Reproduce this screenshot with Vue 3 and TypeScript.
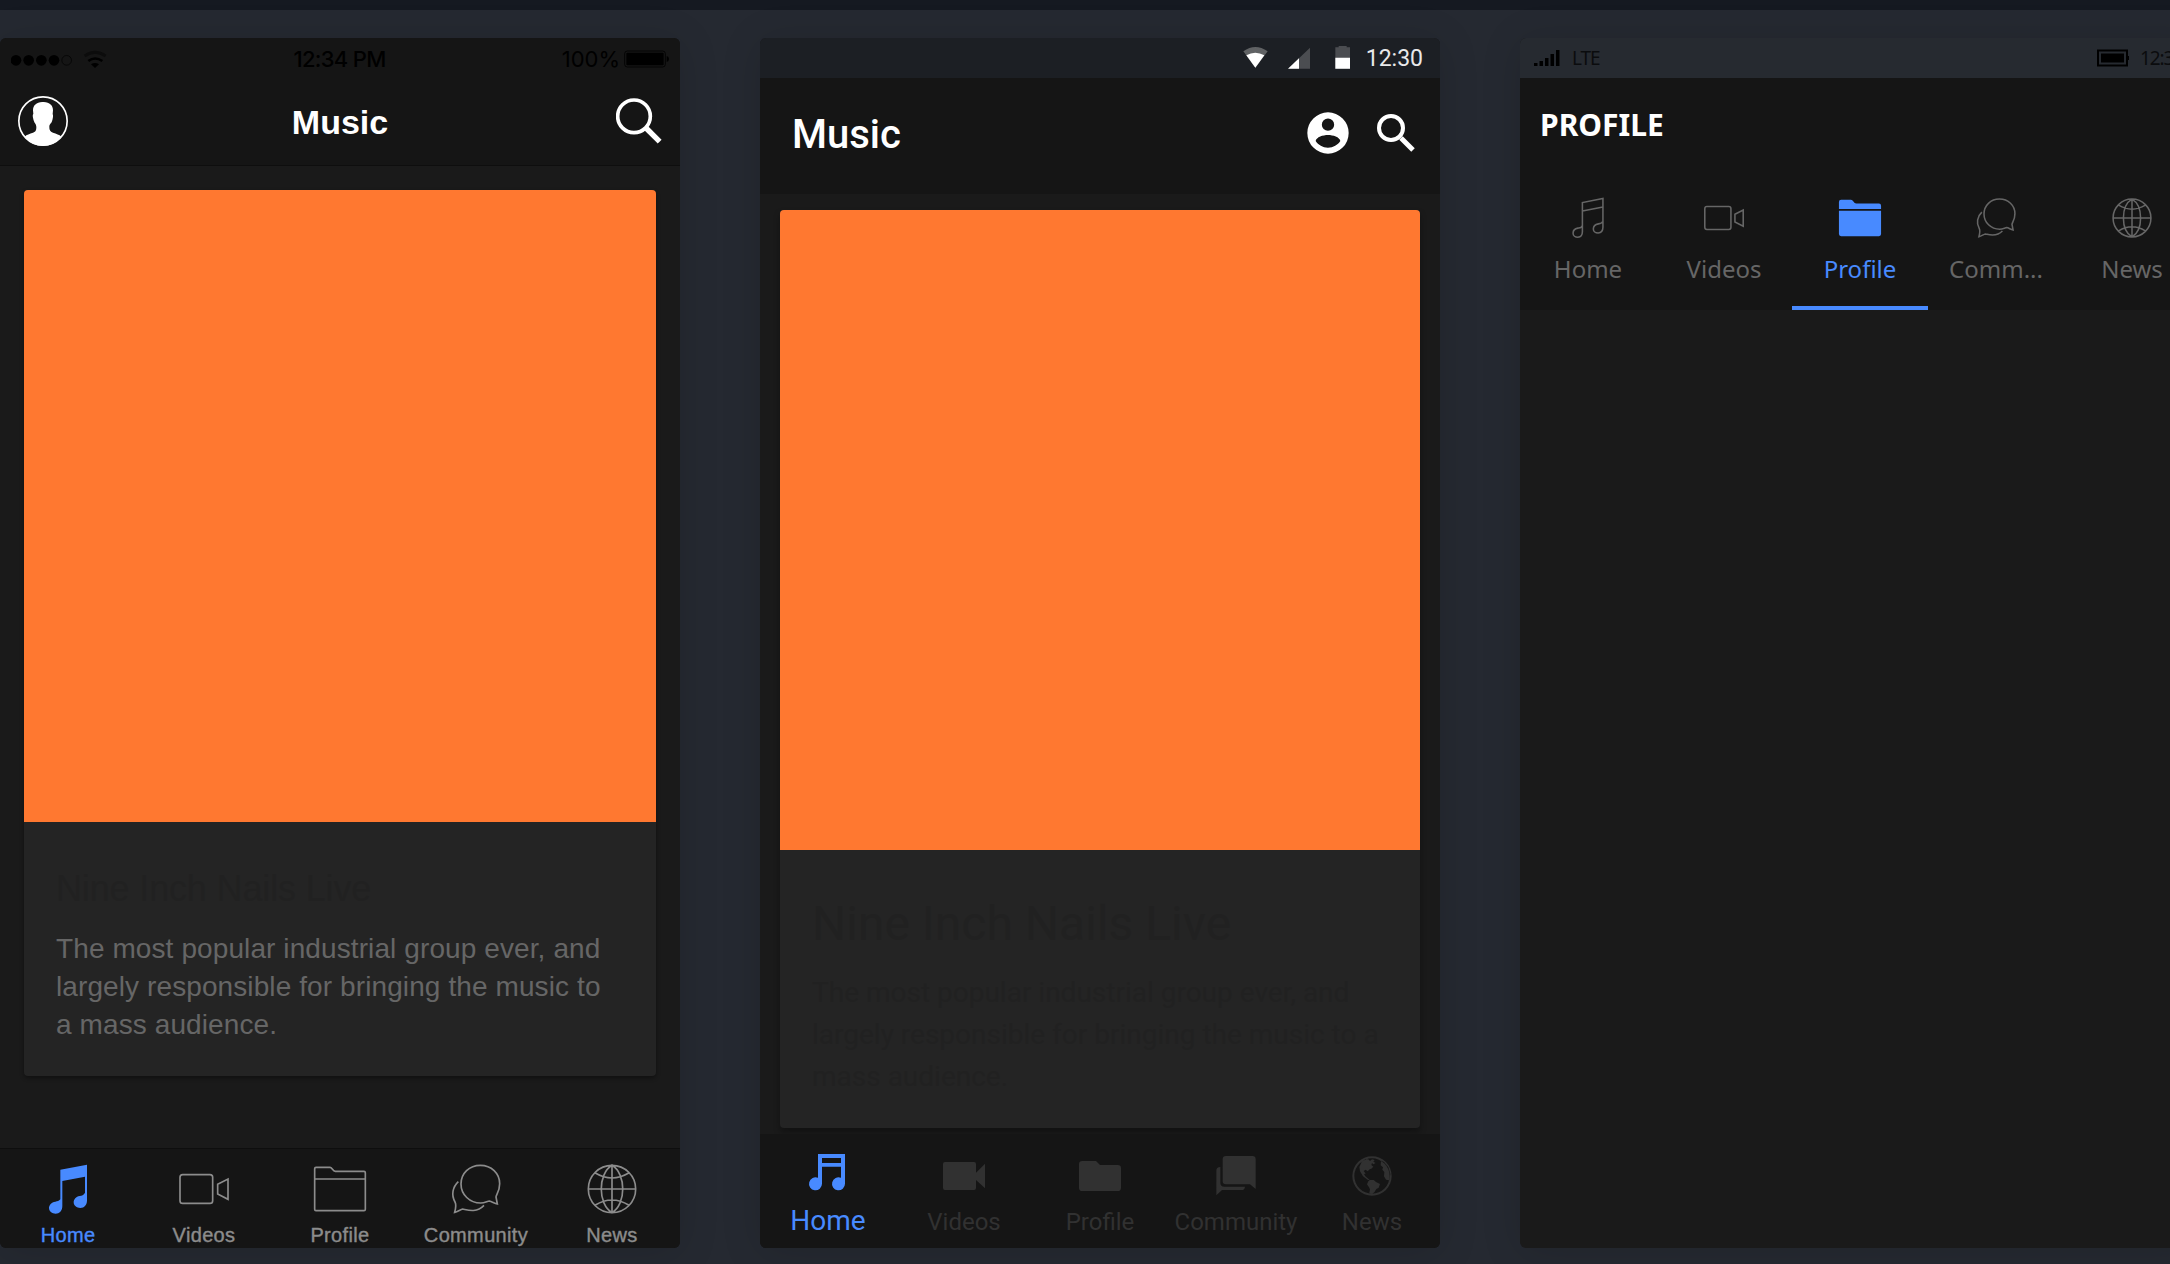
<script setup lang="ts">
type TabName = 'Home' | 'Videos' | 'Profile' | 'Community' | 'News'

const tabs: TabName[] = ['Home', 'Videos', 'Profile', 'Community', 'News']

const card = {
  title: 'Nine Inch Nails Live',
  text: 'The most popular industrial group ever, and largely responsible for bringing the music to a mass audience.',
}

/* Stroked glyphs on a 180-unit grid, shared by the iOS and Windows previews */
const outline: Record<TabName, string> = {
  Home: 'M69 142V32L146 17V125M69 64L146 49M69 118C66 128 58 127 52 128C40 130 34 138 34 147C34 156 42 162 52 162C63 162 69 154 69 142M146 102C143 110 137 111 129 112C118 114 110 121 110 131C110 140 118 146 128 146C139 146 146 138 146 125',
  Videos: 'M26 47H108Q116 47 116 55V125Q116 133 108 133H26Q18 133 18 125V55Q18 47 26 47ZM131 76L162 60V121L131 105Z',
  Profile: 'M14 151V29Q14 25 18 25H60C66 25 68 37 76 37H162Q166 37 166 41V151Q166 155 162 155H18Q14 155 14 151ZM14 60H166',
  Community: 'M154 135L150 114C151 106 161 96 161 74C161 43 136 19 103 19C70 19 45 43 45 75C45 107 71 132 104 132C116 132 123 127 130 126C137 127 145 133 154 135ZM37 68C20 84 15 108 27 129C32 138 29 149 26 160C35 158 44 151 50 150C62 152 90 164 114 139',
  News: 'M90 19A71 71 0 1 0 90 161A71 71 0 1 0 90 19ZM90 19V161M19 90H161M90 19C47 44 47 136 90 161C133 136 133 44 90 19M40 42Q90 72 140 42M40 138Q90 108 140 138',
}

/* Solid glyphs on the same grid for the selected tab */
const solidMusic =
  'M147 17L67 32V121C63 126 58 127 52 128C40 130 33 138 33 147C33 157 42 164 53 164C64 164 73 156 73 141V66L141 53V101C137 108 132 110 125 111C114 113 107 121 107 130C107 140 116 147 127 147C139 147 147 138 147 124Z'
const solidFolder =
  'M11 30Q11 22 19 22H56C64 22 67 36 76 36H161Q169 36 169 44V56H11ZM11 63H169V150Q169 158 161 158H19Q11 158 11 150Z'

/* Material glyphs on a 144-unit grid */
const material: Record<TabName, string> = {
  Home: 'M42 6H123V95.500A19.500 19.500 0 1 1 111 77.500V44H54V95.500A19.500 19.500 0 1 1 42 77.500ZM54 18V33H111V18Z',
  Videos: 'M15 30H102Q108 30 108 36V62L135 35V109L108 84V108Q108 114 102 114H15Q9 114 9 108V36Q9 30 15 30Z',
  Profile: 'M19 27H60L72 39H125Q135 39 135 49V107Q135 117 125 117H19Q9 117 9 107V37Q9 27 19 27Z',
  Community: 'M42 12H121Q131 12 131 22V111L114 97H42Q32 97 32 87V22Q32 12 42 12ZM25 45V92Q25 104 37 104H99Q98 114 89 114H30L13 130V56Q13 45 25 45Z',
  News: 'M72 13A59 59 0 1 0 72 131A59 59 0 1 0 72 13ZM72 19A53 53 0 1 1 72 125A53 53 0 1 1 72 19ZM34 45L41 30L53 21L61 22L66 27L72 22L80 24L76 29L83 33L76 37L72 33L70 39L76 44L70 50L65 52L59 58L53 53L47 57L53 65L48 66L52 73L61 80L66 85L59 83L45 73L36 58ZM66 84L77 84L84 90L96 96L92 107L85 111L79 121L72 126L64 123L66 112L63 106L57 97L61 88ZM99 26L108 30L121 46L127 66L124 85L114 83L108 73L109 60L103 53L105 46L98 40Z',
}
</script>

<template>
  <div class="page">
    <div class="topbar"></div>
    <main class="phones">
      <section class="phone ios">
        <div class="status">
          <svg class="dots" width="98" height="20" viewBox="0 0 294 60">
            <circle cx="15" cy="34" r="16" /><circle cx="53" cy="34" r="16" />
            <circle cx="91" cy="34" r="16" /><circle cx="129" cy="34" r="16" />
            <circle cx="167" cy="34" r="14.500" fill="none" stroke="#000" stroke-width="2" />
            <path d="M221 21Q252 -2 284 21" fill="none" stroke="#0c0c0c" stroke-width="9" />
            <path d="M232 36Q252 21 274 36" fill="none" stroke="#000" stroke-width="8" />
            <path d="M240 46Q252 38 264 46L252 57Z" />
          </svg>
          <span class="clock">12:34 PM</span>
          <span class="power">
            <span class="pct">100%</span>
            <svg width="45" height="18" viewBox="0 0 135 54">
              <rect x="2" y="3" width="122" height="48" rx="8" fill="none" stroke="#000" stroke-width="2.500" />
              <rect x="7" y="8" width="112" height="38" rx="3" />
              <path d="M128 18q7 1 7 9t-7 9z" />
            </svg>
          </span>
        </div>
        <header class="bar">
          <svg width="60" height="60" viewBox="0 0 180 180">
            <circle cx="90" cy="90" r="72.500" fill="none" stroke="#fff" stroke-width="5" />
            <path fill="#fff" d="M90 33C71 32 60 43 60 58L61 69C57 73 61 84 63 91C65 98 70 99 70 108C70 117 69 122 60 125C50 129 41 130 35 137C65 174 115 174 145 137C139 130 130 129 120 125C111 122 109 117 109 108C109 99 115 98 117 91C119 84 122 73 119 69L120 58C120 43 109 32 90 33Z" />
          </svg>
          <h1>Music</h1>
          <svg width="46" height="46" viewBox="0 0 138 138" fill="none" stroke="#fff">
            <circle cx="54" cy="55" r="49" stroke-width="11" />
            <path d="M87 87L131 131" stroke-width="16" />
          </svg>
        </header>
        <div class="content">
          <article class="card">
            <div class="cover"></div>
            <div class="body">
              <h2>{{ card.title }}</h2>
              <p>{{ card.text }}</p>
            </div>
          </article>
        </div>
        <nav class="tabs">
          <a v-for="tab in tabs" :key="tab" :class="{ on: tab === 'Home' }">
            <svg width="60" height="60" viewBox="0 0 180 180">
              <path v-if="tab === 'Home'" :d="solidMusic" fill="currentColor" />
              <path v-else :d="outline[tab]" fill="none" stroke="currentColor" stroke-width="5" />
            </svg>
            <span>{{ tab }}</span>
          </a>
        </nav>
      </section>

      <section class="phone android">
        <div class="status">
          <svg width="108" height="23" viewBox="0 0 324 69" fill="#fff">
            <path d="M1 16Q37 -10 74 16L37 65Z" fill="#606264" />
            <path d="M10 28Q37 12 64 28L37 65Z" />
            <path d="M135 68L201 5V68Z" fill="#4b4d51" />
            <path d="M135 68L168 36.500V68Z" />
            <path d="M277 4h10V0h24v4h10v64h-44z" fill="#4b4d51" />
            <path d="M277 35h44v33h-44z" />
          </svg>
          <span>12:30</span>
        </div>
        <header class="bar">
          <h1>Music</h1>
          <svg width="42" height="42" viewBox="0 0 126 126">
            <path fill="#fff" fill-rule="evenodd" d="M63 1A62 62 0 1 0 63 125A62 62 0 1 0 63 1ZM63 19.500A18.500 18.500 0 1 1 63 56.500A18.500 18.500 0 1 1 63 19.500ZM26 87C28 75 48 69 63 69C78 69 98 75 100 87C92 99 79 107 63 107C47 107 34 99 26 87Z" />
          </svg>
          <svg width="38" height="38" viewBox="0 0 114 114" fill="none" stroke="#fff">
            <circle cx="42" cy="42" r="36" stroke-width="12" />
            <path d="M72 72L108 108" stroke-width="15" />
          </svg>
        </header>
        <div class="content">
          <article class="card">
            <div class="cover"></div>
            <div class="body">
              <h2>{{ card.title }}</h2>
              <p>{{ card.text }}</p>
            </div>
          </article>
        </div>
        <nav class="tabs">
          <a v-for="tab in tabs" :key="tab" :class="{ on: tab === 'Home' }">
            <svg width="48" height="48" viewBox="0 0 144 144">
              <path :d="material[tab]" fill="currentColor" fill-rule="evenodd" />
            </svg>
            <span>{{ tab }}</span>
          </a>
        </nav>
      </section>

      <section class="phone windows">
        <div class="status">
          <svg width="26" height="17" viewBox="0 0 26 17">
            <path d="M0 13h3.500v3H0zM5.500 11H9v5H5.500zM11 8h3.500v8H11zM16.500 4H20v12h-3.500zM22 0h3.500v16H22z" />
          </svg>
          <span class="lte">LTE</span>
          <span class="power">
            <svg width="32" height="18" viewBox="0 0 32 18">
              <path d="M1 1.500h29v15H1z" fill="none" stroke="#000" stroke-width="2" />
              <path d="M4 4.500h23v9H4zM30 7h2v4h-2z" />
            </svg>
            <span class="time">12:30</span>
          </span>
        </div>
        <header class="head">
          <h1>PROFILE</h1>
          <nav class="tabs">
            <a v-for="tab in tabs" :key="tab" :class="{ on: tab === 'Profile' }">
              <svg width="48" height="48" viewBox="0 0 180 180">
                <path v-if="tab === 'Profile'" :d="solidFolder" fill="currentColor" />
                <path v-else :d="outline[tab]" fill="none" stroke="currentColor" stroke-width="5.800" />
              </svg>
              <span>{{ tab === 'Community' ? 'Comm...' : tab }}</span>
            </a>
          </nav>
        </header>
      </section>
    </main>
  </div>
</template>

<style>
html,
body {
  margin: 0;
  overflow: hidden;
}
</style>

<style scoped>
* {
  box-sizing: border-box;
}
h1,
h2,
p {
  margin: 0;
  font-weight: 400;
}
svg {
  display: block;
  flex: none;
}
.page {
  width: 2170px;
  height: 1264px;
  overflow: hidden;
  background: #252931;
}
.topbar {
  height: 10px;
  background: #151921;
}
.phones {
  display: flex;
  gap: 80px;
  padding-top: 28px;
}
.phone {
  display: flex;
  flex: none;
  flex-direction: column;
  width: 680px;
  height: 1210px;
  overflow: hidden;
  border-radius: 6px;
  background: #1a1a1a;
  box-shadow: 0 4px 40px rgba(0, 0, 0, 0.13);
}
.status,
.bar {
  display: flex;
  flex: none;
  align-items: center;
}
.status {
  height: 40px;
  white-space: nowrap;
}
.content {
  flex: 1;
}
.card {
  overflow: hidden;
  border-radius: 4px;
  background: #242424;
}
.cover {
  background: #ff7830;
}
.tabs {
  display: flex;
  flex: none;
}
.tabs a {
  display: flex;
  flex: none;
  flex-direction: column;
  align-items: center;
  width: 136px;
}
.tabs a.on {
  color: #488aff;
}

/* iOS */
.ios {
  font-family: 'Liberation Sans', sans-serif;
}
.ios .status {
  justify-content: space-between;
  padding: 2px 11px 0;
  background: #151515;
  font: 500 22px/40px Inter, sans-serif;
  color: #000;
}
.ios .dots {
  width: 98px;
}
.ios .clock {
  width: 120px;
  margin-left: 54px;
  text-align: center;
  letter-spacing: -0.7px;
}
.ios .power {
  display: flex;
  align-items: center;
  justify-content: flex-end;
  gap: 4px;
  width: 153px;
  font-weight: 400;
}
.ios .bar {
  justify-content: space-between;
  height: 88px;
  padding: 0 18px 1px 13px;
  border-bottom: 1px solid #0e0e0e;
  background: #151515;
}
.ios .bar h1 {
  padding: 2px 0 0;
  margin-right: 9px;
  color: #fff;
  font-size: 34px;
  font-weight: 700;
}
.ios .content {
  padding: 24px;
}
.ios .card {
  height: 886px;
  box-shadow: 0 2px 4px rgba(0, 0, 0, 0.4);
}
.ios .cover {
  height: 632px;
}
.ios .body {
  padding: 47px 40px 0 32px;
}
.ios h2 {
  color: #212121;
  font-size: 36px;
  line-height: 40px;
  letter-spacing: -0.15px;
}
.ios p {
  margin-top: 21px;
  color: #666;
  font-size: 28px;
  line-height: 38px;
  letter-spacing: 0.1px;
}
.ios .tabs {
  height: 100px;
  padding-top: 10px;
  border-top: 1px solid #0e0e0e;
  background: #151515;
  color: #8c8c8c;
}
.ios .tabs span {
  margin-top: 4px;
  font-size: 20px;
  line-height: 24px;
  letter-spacing: 0.35px;
  -webkit-text-stroke: 0.4px currentColor;
}

/* Android */
.android {
  font-family: Roboto, sans-serif;
}
.android .status {
  justify-content: flex-end;
  gap: 15px;
  padding-right: 17px;
  background: #1c1f24;
  color: #e9e9ea;
  font-size: 23px;
}
.android .status svg {
  margin-bottom: 1px;
}
.android .bar {
  height: 116px;
  padding: 0 25px 6px 32px;
  background: #151515;
}
.android .bar h1 {
  flex: 1;
  padding-top: 3px;
  color: #fff;
  font-size: 40px;
  font-weight: 500;
}
.android .bar svg + svg {
  margin-left: 28px;
}
.android .content {
  padding: 16px 20px 0;
}
.android .card {
  height: 918px;
  box-shadow: 0 4px 6px rgba(0, 0, 0, 0.35);
}
.android .cover {
  height: 640px;
}
.android .body {
  padding: 46px 32px 0;
}
.android h2 {
  color: #212121;
  font-size: 48px;
  line-height: 56px;
}
.android p {
  margin-top: 20px;
  color: #212121;
  font-size: 28px;
  line-height: 42px;
}
.android .tabs {
  height: 114px;
  padding-top: 18px;
  background: #151515;
  color: #313131;
}
.android .tabs span {
  margin-top: 8px;
  font-size: 24px;
  line-height: 28px;
}
.android .tabs .on span {
  margin-top: 7px;
  font-size: 28px;
}

/* Windows */
.windows {
  font-family: 'Noto Sans', sans-serif;
}
.windows .status {
  padding-left: 14px;
  background: #262a30;
  color: #0b0c0e;
  font-size: 19px;
  letter-spacing: -1.1px;
}
.windows .lte {
  margin-left: 12px;
}
.windows .power {
  display: flex;
  align-items: center;
  gap: 11px;
  width: 103px;
  margin-left: auto;
}
.windows .head {
  height: 232px;
  padding-top: 27px;
  background: #151515;
}
.windows h1 {
  padding-left: 20px;
  color: #fff;
  font-size: 30px;
  font-weight: 700;
  line-height: 40px;
}
.windows .tabs {
  height: 165px;
  padding-top: 49px;
  color: #666;
}
.windows .tabs a {
  height: 116px;
  border-bottom: 4px solid transparent;
}
.windows .tabs a.on {
  border-color: #488aff;
}
.windows .tabs span {
  margin-top: 11px;
  font-size: 24px;
  line-height: 32px;
}
</style>
